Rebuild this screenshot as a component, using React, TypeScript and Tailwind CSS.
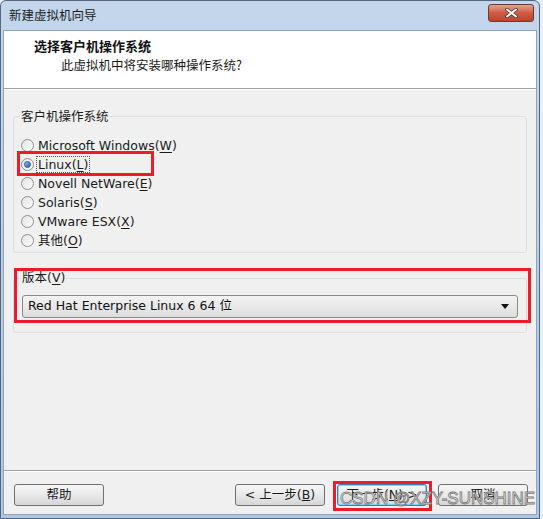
const cjk = "font-['Tahoma','DejaVu_Sans','Noto_Sans_CJK_SC',sans-serif]";

function Radio({ label, mnemonic, checked }: { label: string; mnemonic: string; checked?: boolean }) {
  return (
    <div className="flex items-center h-[19px]">
      <span className="w-[13px] h-[13px] rounded-full border border-[#8f8f8f] bg-gradient-to-br from-[#e4e4e4] to-[#fbfbfb] flex items-center justify-center shrink-0">
        {checked && <span className="w-[7px] h-[7px] rounded-full bg-gradient-to-br from-[#8cc4f2] to-[#1c5fa8] border border-[#2a5c93]" />}
      </span>
      <span className={`ml-[3px] px-[1px] text-[12.5px] text-[#1a1a1a] leading-[15px] ${checked ? "outline outline-1 outline-dotted outline-[#555]" : ""}`}>
        {label}(<span className="underline underline-offset-2">{mnemonic}</span>)
      </span>
    </div>
  );
}

function Btn({ children, focus }: { children: React.ReactNode; focus?: boolean }) {
  return (
    <div
      className={`h-[22px] rounded-[3px] border flex items-center justify-center text-[12.5px] text-[#1a1a1a] whitespace-nowrap bg-gradient-to-b from-[#f6f6f6] via-[#e9e9e9] to-[#d6d6d6] ${
        focus ? "border-[#3c7fb1] shadow-[inset_0_0_0_1px_#7fd3f7]" : "border-[#707070]"
      }`}
    >
      {children}
    </div>
  );
}

export default function App() {
  return (
    <div className={`relative w-[543px] h-[519px] overflow-hidden bg-[#e6eef7] ${cjk}`}>
      <div className="flex flex-col w-[540px] h-[519px] rounded-t-[6px] border border-[#56677d] bg-gradient-to-b from-[#c3d6ec] to-[#adc6e3]">
        {/* title bar */}
        <div className="h-[29px] flex items-center justify-between pl-[8px] pr-[5px]">
          <span className="text-[12.5px] text-[#1d1d1d] font-['Noto_Sans_CJK_SC',sans-serif]">新建虚拟机向导</span>
          <div className="w-[46px] h-[18px] -mt-[6px] rounded-[3px] border border-[#6a3a38] bg-gradient-to-b from-[#e7a08f] via-[#cf5a41] to-[#c0432b] flex items-center justify-center">
            <svg width="13" height="10" viewBox="0 0 13 10">
              <path d="M2 1.5 L11 8.5 M11 1.5 L2 8.5" stroke="#4a2a26" strokeWidth="3.4" strokeLinecap="round" />
              <path d="M2 1.5 L11 8.5 M11 1.5 L2 8.5" stroke="#ffffff" strokeWidth="2" strokeLinecap="round" />
            </svg>
          </div>
        </div>

        {/* client area */}
        <div className="flex-1 mx-[2px] mb-[3px] flex flex-col border border-[#8ea3bd] bg-[#f0f0f0]">
          <div className="h-[58px] bg-white border-b border-[#a0a0a0] pl-[30px] pt-[6px]">
            <div className="text-[13px] font-bold text-[#111] font-['Noto_Sans_CJK_SC',sans-serif] leading-[18px]">选择客户机操作系统</div>
            <div className="mt-[1px] pl-[27px] text-[12.5px] text-[#1a1a1a] font-['Noto_Sans_CJK_SC',sans-serif] leading-[18px]">此虚拟机中将安装哪种操作系统?</div>
          </div>
          <div className="border-t border-white flex-1 flex flex-col px-[9px]">
            <fieldset className="mt-[18px] h-[145px] border border-[#d5dfe5] rounded-[3px] px-[7px]">
              <legend className="px-[1px] -ml-[1px] text-[12.5px] text-[#1a1a1a] font-['Noto_Sans_CJK_SC',sans-serif] leading-[16px]">客户机操作系统</legend>
              <div className="mt-[12px] flex flex-col">
                <Radio label="Microsoft Windows" mnemonic="W" />
                <Radio label="Linux" mnemonic="L" checked />
                <Radio label="Novell NetWare" mnemonic="E" />
                <Radio label="Solaris" mnemonic="S" />
                <Radio label="VMware ESX" mnemonic="X" />
                <Radio label="其他" mnemonic="O" />
              </div>
            </fieldset>

            <fieldset className="mt-[17px] h-[63px] border border-[#d5dfe5] rounded-[3px] px-[8px]">
              <legend className="px-[1px] -ml-[1px] text-[12.5px] text-[#1a1a1a] leading-[16px]">
                版本(<span className="underline underline-offset-2">V</span>)
              </legend>
              <div className="mt-[9px] h-[23px] rounded-[3px] border border-[#8a8a8a] bg-gradient-to-b from-[#f3f3f3] to-[#dedede] flex items-center justify-between pl-[5px] pr-[8px]">
                <span className="text-[12.5px] text-[#111]">Red Hat Enterprise Linux 6 64 位</span>
                <svg width="8" height="5" viewBox="0 0 8 5">
                  <path d="M0 0 H8 L4 5 Z" fill="#111" />
                </svg>
              </div>
            </fieldset>

            <div className="flex-1" />
            <div className="-mx-[9px] border-t border-[#a0a0a0] border-b-[1px] border-b-white" />
            <div className="h-[42px] flex items-center pt-[4px] pl-[1px] -mr-[1px]">
              <div className="w-[90px]"><Btn>帮助</Btn></div>
              <div className="flex-1" />
              <div className="w-[90px]"><Btn>&lt; 上一步(<span className="underline">B</span>)</Btn></div>
              <div className="w-[90px] ml-[12px]"><Btn focus>下一步(<span className="underline">N</span>) &gt;</Btn></div>
              <div className="w-[90px] ml-[11px]"><Btn>取消</Btn></div>
            </div>
          </div>
        </div>
      </div>

      {/* red annotation boxes */}
      <div className="absolute left-[17px] top-[151px] w-[137px] h-[25px] border-[3px] border-[#ec1c2b]" />
      <div className="absolute left-[14px] top-[268px] w-[517px] h-[55px] border-[3px] border-[#ec1c2b]" />
      <div className="absolute left-[333px] top-[481px] w-[99px] h-[30px] border-[3px] border-[#ec1c2b]" />

      {/* watermark */}
      <div className="absolute left-[340px] top-[486px] whitespace-nowrap text-[17px] text-[#f2f2f2] font-['Liberation_Sans',sans-serif] [-webkit-text-stroke:0.8px_#7a7a7a]">
        CSDN @XZY-SUNSHINE
      </div>
    </div>
  );
}
